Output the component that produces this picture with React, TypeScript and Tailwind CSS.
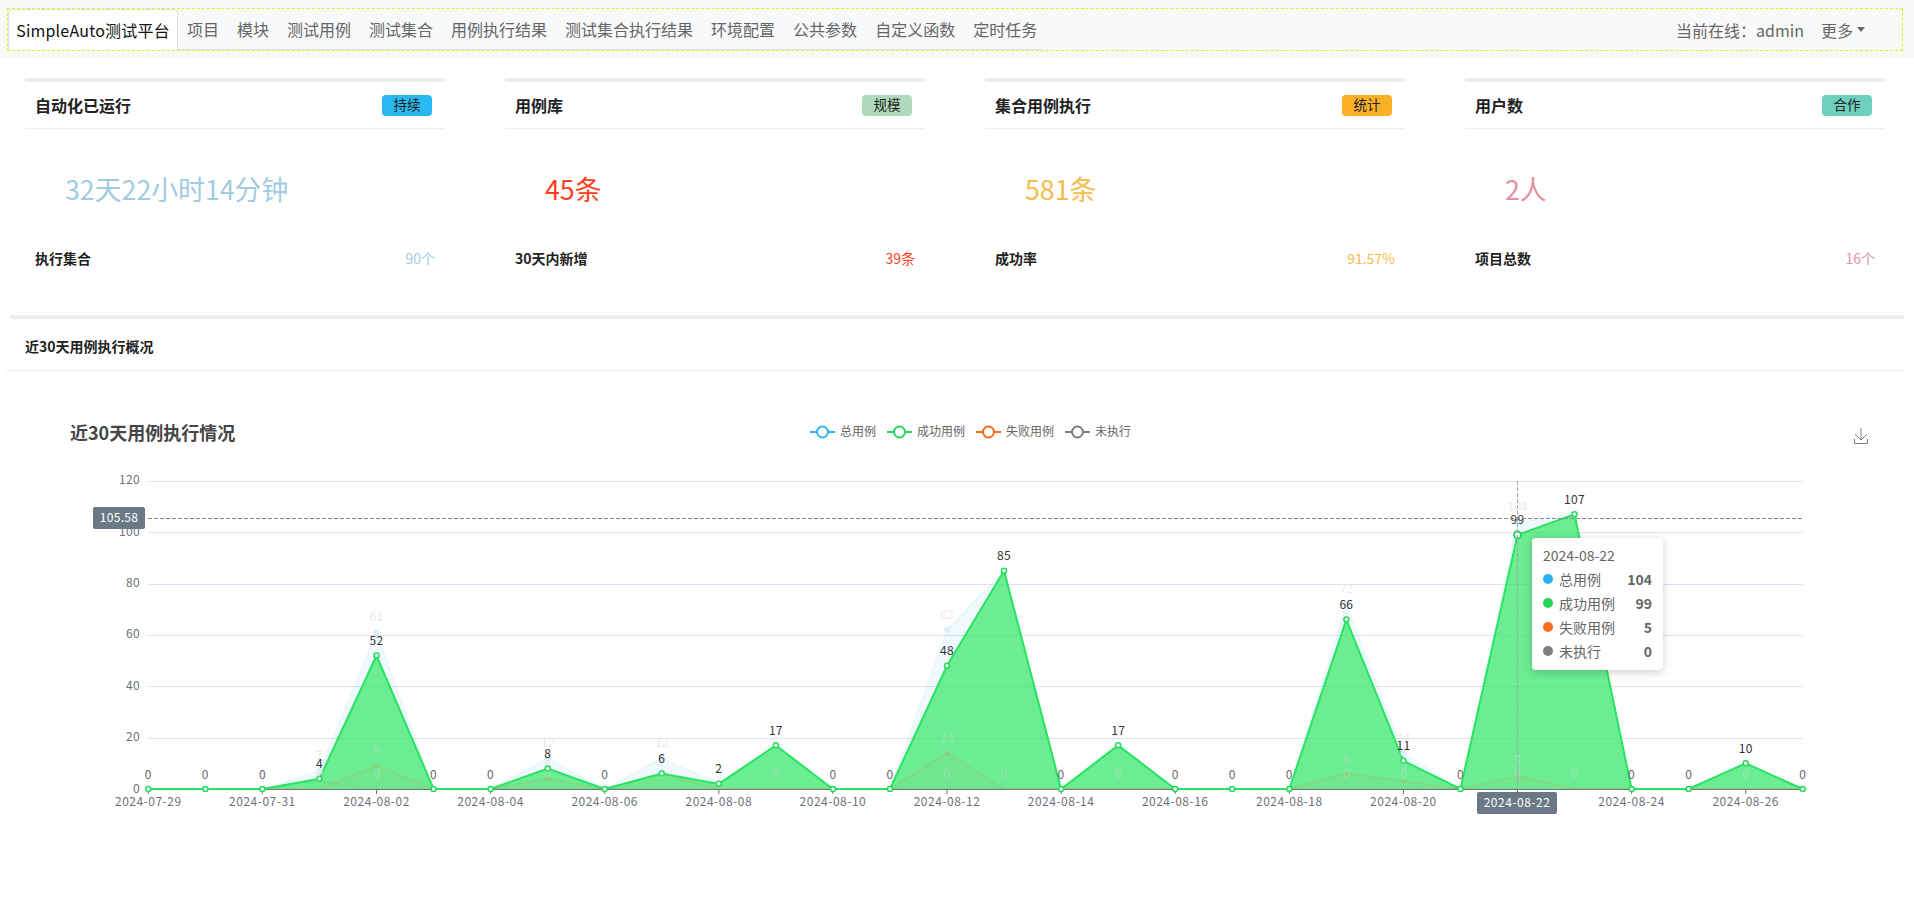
const FONT = '"Noto Sans CJK SC", "Noto Sans", sans-serif';

const navItems = ["项目", "模块", "测试用例", "测试集合", "用例执行结果", "测试集合执行结果", "环境配置", "公共参数", "自定义函数", "定时任务"];

const cards = [
  { title: "自动化已运行", badge: "持续", badgeClass: "bg-[#29b9f0]", big: "32天22小时14分钟", color: "text-[#a3cbdf]", label: "执行集合", value: "90个" },
  { title: "用例库", badge: "规模", badgeClass: "bg-[#aed9bb]", big: "45条", color: "text-[#ff3f22]", label: "30天内新增", value: "39条" },
  { title: "集合用例执行", badge: "统计", badgeClass: "bg-[#fbb026]", big: "581条", color: "text-[#f7bb4c]", label: "成功率", value: "91.57%" },
  { title: "用户数", badge: "合作", badgeClass: "bg-[#6dd1be]", big: "2人", color: "text-[#e58fa0]", label: "项目总数", value: "16个" },
];

// total, success, fail, not run
const rows: [number, number, number, number][] = [
  [0, 0, 0, 0], [0, 0, 0, 0], [0, 0, 0, 0], [7, 4, 0, 3], [61, 52, 9, 0], [0, 0, 0, 0], [0, 0, 0, 0], [12, 8, 4, 0],
  [0, 0, 0, 0], [12, 6, 6, 0], [2, 2, 0, 0], [17, 17, 0, 0], [0, 0, 0, 0], [0, 0, 0, 0], [62, 48, 14, 0], [85, 85, 0, 0],
  [0, 0, 0, 0], [17, 17, 0, 0], [0, 0, 0, 0], [0, 0, 0, 0], [0, 0, 0, 0], [72, 66, 6, 0], [14, 11, 3, 0], [0, 0, 0, 0],
  [104, 99, 5, 0], [107, 107, 0, 0], [0, 0, 0, 0], [0, 0, 0, 0], [10, 10, 0, 0], [0, 0, 0, 0],
];

const dates = rows.map((_, i) => {
  const d = new Date(Date.UTC(2024, 6, 29 + i));
  return d.toISOString().slice(0, 10);
});

const X = (i: number) => 148.3 + 57.05 * i;
const Y = (v: number) => 789 - 2.5667 * v;
const BASE = 789;

const linePath = (k: number) => rows.map((r, i) => `${i ? "L" : "M"}${X(i)} ${Y(r[k])}`).join(" ");
const areaPath = (k: number) => `${linePath(k)} L${X(29)} ${BASE} L${X(0)} ${BASE} Z`;

const legend = [
  { name: "总用例", color: "#2fb4f5", x: 810 },
  { name: "成功用例", color: "#26d95c", x: 887 },
  { name: "失败用例", color: "#ff6a1c", x: 976 },
  { name: "未执行", color: "#7f7f7f", x: 1065 },
];

const tooltipRows = [
  { name: "总用例", value: 104, dot: "bg-[#2cb0f0]" },
  { name: "成功用例", value: 99, dot: "bg-[#26d45b]" },
  { name: "失败用例", value: 5, dot: "bg-[#ff6a1c]" },
  { name: "未执行", value: 0, dot: "bg-[#7f7f7f]" },
];

const Chart = () => (
  <svg width={1904} height={544} viewBox="0 371 1904 544" className="block" fontFamily={FONT}>
    <text x={70} y={440} fontSize={18} fontWeight={700} fill="#464646">近30天用例执行情况</text>

    {legend.map((l) => (
      <g key={l.name}>
        <line x1={l.x} x2={l.x + 25} y1={432} y2={432} stroke={l.color} strokeWidth={2} />
        <circle cx={l.x + 12.5} cy={432} r={5.5} fill="#fff" stroke={l.color} strokeWidth={2} />
        <text x={l.x + 30} y={436} fontSize={12} fill="#666">{l.name}</text>
      </g>
    ))}

    {/* save as image */}
    <path d="M1861 428V440M1855 434L1861 440L1867 434M1854.5 439V443.5H1867.5V439" fill="none" stroke="#808080" strokeWidth={1} />

    {/* grid */}
    {[0, 20, 40, 60, 80, 100, 120].map((v) => (
      <g key={v}>
        {v > 0 && <line x1={148} x2={1802.5} y1={Math.round(Y(v)) + 0.5} y2={Math.round(Y(v)) + 0.5} stroke="#dde3f3" />}
        <text x={140} y={Y(v) + 3.5} fontSize={12} textAnchor="end" letterSpacing={0.3} fill="#6e7079">{v}</text>
      </g>
    ))}
    <line x1={148} x2={1802.5} y1={789.5} y2={789.5} stroke="#6e7079" />
    {dates.map((d, i) =>
      i % 2 === 0 ? (
        <g key={d}>
          <line x1={X(i)} x2={X(i)} y1={789} y2={794} stroke="#6e7079" />
          {i !== 24 && <text x={X(i)} y={806} fontSize={12} textAnchor="middle" letterSpacing={0.5} fill="#6e7079">{d}</text>}
        </g>
      ) : null
    )}

    {/* faded series */}
    <path d={areaPath(0)} fill="#2fb4f5" fillOpacity={0.08} stroke="#2fb4f5" strokeOpacity={0.06} strokeWidth={2} />

    {/* success series */}
    <path d={areaPath(1)} fill="#2de660" fillOpacity={0.68} />

    <path d={areaPath(2)} fill="#ff6a1c" fillOpacity={0.03} />
    <path d={linePath(2)} fill="none" stroke="#ff6a1c" strokeOpacity={0.13} strokeWidth={2} />
    <path d={linePath(3)} fill="none" stroke="#7f7f7f" strokeOpacity={0.08} strokeWidth={2} />
    <path d={linePath(1)} fill="none" stroke="#28e461" strokeWidth={2} />

    {rows.map((r, i) => (
      <g key={i}>
        {r[0] > 0 && r[0] !== r[1] && <circle cx={X(i)} cy={Y(r[0])} r={3} fill="#d9effc" />}
        {r[2] > 0 && <circle cx={X(i)} cy={Y(r[2])} r={2.5} fill="#ff6a1c" fillOpacity={0.12} />}
        {r[1] > 0 && r[0] !== r[1] && (
          <text x={X(i)} y={Y(r[0]) - 11} fontSize={12} textAnchor="middle" fill="#e4e4e4" fillOpacity={0.8}>{r[0]}</text>
        )}
        {r[1] > 0 && r[2] > 0 && (
          <text x={X(i)} y={Y(r[2]) - 11} fontSize={12} textAnchor="middle" fill="#ddd" fillOpacity={0.45}>{r[2]}</text>
        )}
        {r[1] > 0 && (
          <text x={X(i)} y={BASE - 11} fontSize={12} textAnchor="middle" fill="#ddd" fillOpacity={0.45}>0</text>
        )}
        <circle cx={X(i)} cy={Y(r[1])} r={i === 24 ? 3.5 : 2.5} fill="#fff" stroke="#26d95c" strokeWidth={i === 24 ? 2 : 1.5} />
        <text x={X(i)} y={Y(r[1]) - 10.5} fontSize={12} textAnchor="middle" letterSpacing={0.3} fill={r[1] === 0 ? "#666" : "#333"}>{r[1]}</text>
      </g>
    ))}

    {/* crosshair */}
    <line x1={X(24)} x2={X(24)} y1={481} y2={789} stroke="#a5a5a5" strokeDasharray="4 2" />
    <line x1={148} x2={1802.5} y1={518.5} y2={518.5} stroke="#8a8a8a" strokeDasharray="4 2" />
    <rect x={93} y={507} width={52} height={22} rx={2} fill="#6a7985" />
    <text x={119} y={522} fontSize={12} textAnchor="middle" letterSpacing={0.3} fill="#fff">105.58</text>
    <rect x={1477} y={792} width={80} height={22} rx={2} fill="#6a7985" />
    <text x={1517} y={807} fontSize={12} textAnchor="middle" letterSpacing={0.5} fill="#fff">{dates[24]}</text>
  </svg>
);

export default function App() {
  return (
    <div className="min-h-[915px] bg-white" style={{ fontFamily: FONT }}>
      <nav className="h-[58px] bg-[#f8f9fa] pt-2 pl-[7px] pr-[11px]">
        <div className="flex h-[43px] items-stretch justify-between border border-dashed border-[#d8f52a]">
          <ul className="flex items-stretch border-b border-[#dee2e6] pr-[5px]">
            <li className="-mb-px flex w-[170px] items-center justify-center rounded-t border border-b-0 border-[#dee2e6] bg-white text-base leading-6 tracking-[0.2px] text-[#111]">
              SimpleAuto测试平台
            </li>
            <div className="ml-[9px] flex items-center gap-[18px]">
              {navItems.map((item) => (
                <li key={item} className="text-base leading-6 text-[#666]">{item}</li>
              ))}
            </div>
          </ul>
          <div className="flex items-center pr-[37px] text-base leading-6 text-[#666]">
            <span>当前在线：admin</span>
            <span className="ml-[17px] flex items-center">
              更多
              <span className="ml-[4px] h-0 w-0 border-x-[4px] border-t-[5px] border-x-transparent border-t-[#666]" />
            </span>
          </div>
        </div>
      </nav>

      <div className="grid w-[1860px] grid-cols-4 gap-[60px] pt-5 ml-[25px]">
        {cards.map((c) => (
          <div key={c.title} className="w-[420px] border-t-4 border-[#eeeeee]">
            <div className="flex h-[47px] items-center justify-between border-b border-[#eeeeee] pl-[10px] pr-[13px]">
              <span className="text-base font-bold leading-6 text-[#222]">{c.title}</span>
              <span className={`flex h-[21px] w-[50px] items-center justify-center rounded text-[13.5px] leading-none text-[#222] ${c.badgeClass}`}>
                {c.badge}
              </span>
            </div>
            <div className={`h-[96px] pl-[40px] pt-[39px] text-[26.8px] leading-[42px] ${c.color}`}>{c.big}</div>
            <div className="flex h-[34px] items-end justify-between pl-[10px] pr-[10px] text-sm leading-5">
              <span className="translate-y-[9px] font-bold text-[#222]">{c.label}</span>
              <span className={`translate-y-[9px] ${c.color}`}>{c.value}</span>
            </div>
          </div>
        ))}
      </div>

      <section className="mt-[56px] ml-[10px] w-[1894px] border-t-4 border-[#eeeeee]" />
      <div className="ml-[5px] flex h-[52px] w-[1899px] items-center border-b border-[#eeeeee] pl-[20px] pt-[3px] text-sm font-bold leading-5 text-[#222]">
        近30天用例执行概况
      </div>

      <div className="relative h-[544px]">
        <Chart />
        <div className="absolute left-[1532px] top-[167px] h-[132px] w-[131px] rounded bg-white px-[11px] py-[5px] text-sm leading-6 text-[#666] shadow-[0_2px_10px_rgba(0,0,0,0.2)]">
          <div>2024-08-22</div>
          {tooltipRows.map((r) => (
            <div key={r.name} className="flex items-center">
              <span className={`mr-[6px] h-[10px] w-[10px] rounded-full ${r.dot}`} />
              <span>{r.name}</span>
              <span className="ml-auto font-bold">{r.value}</span>
            </div>
          ))}
        </div>
      </div>
    </div>
  );
}
